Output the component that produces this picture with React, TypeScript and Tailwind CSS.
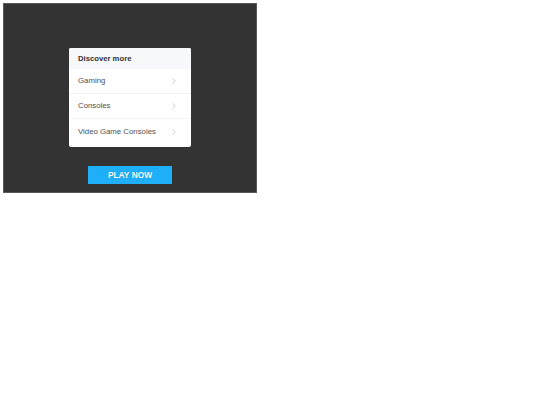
import { ChevronRight } from 'lucide-react';

const topics = ['Gaming', 'Consoles', 'Video Game Consoles'];

const App = () => {
  return (
    <div className="p-[3px] font-['Liberation_Sans',Arial,sans-serif]">
      <div className="w-[254px] h-[190px] bg-[#333333] border border-[#5a5a5a] flex flex-col items-center">
        <div className="mt-[44px] w-[122px] h-[99px] bg-white rounded-[2px] overflow-hidden flex flex-col">
          <div className="h-[21px] bg-[#f7f8fa] flex items-center px-[9px] text-[7.7px] font-bold text-[#303134]">
            Discover more
          </div>
          {topics.map((topic, i) => (
            <div
              key={topic}
              className={`h-[25px] flex items-center justify-between pl-[9px] pr-[12px] text-[7.8px] text-[#4d5156] ${i < topics.length - 1 ? 'border-b border-[#f1f3f4]' : ''}`}
            >
              <span>{topic}</span>
              <ChevronRight className="w-[10px] h-[10px] text-[#9aa0a6]" strokeWidth={1.3} />
            </div>
          ))}
        </div>
        <button className="mt-[19px] w-[84px] h-[18px] bg-[#1eaff8] text-white font-bold text-[8.4px] flex items-center justify-center [text-shadow:0_0_1px_rgba(0,0,0,0.3)]">
          PLAY NOW
        </button>
      </div>
    </div>
  );
};

export default App;
